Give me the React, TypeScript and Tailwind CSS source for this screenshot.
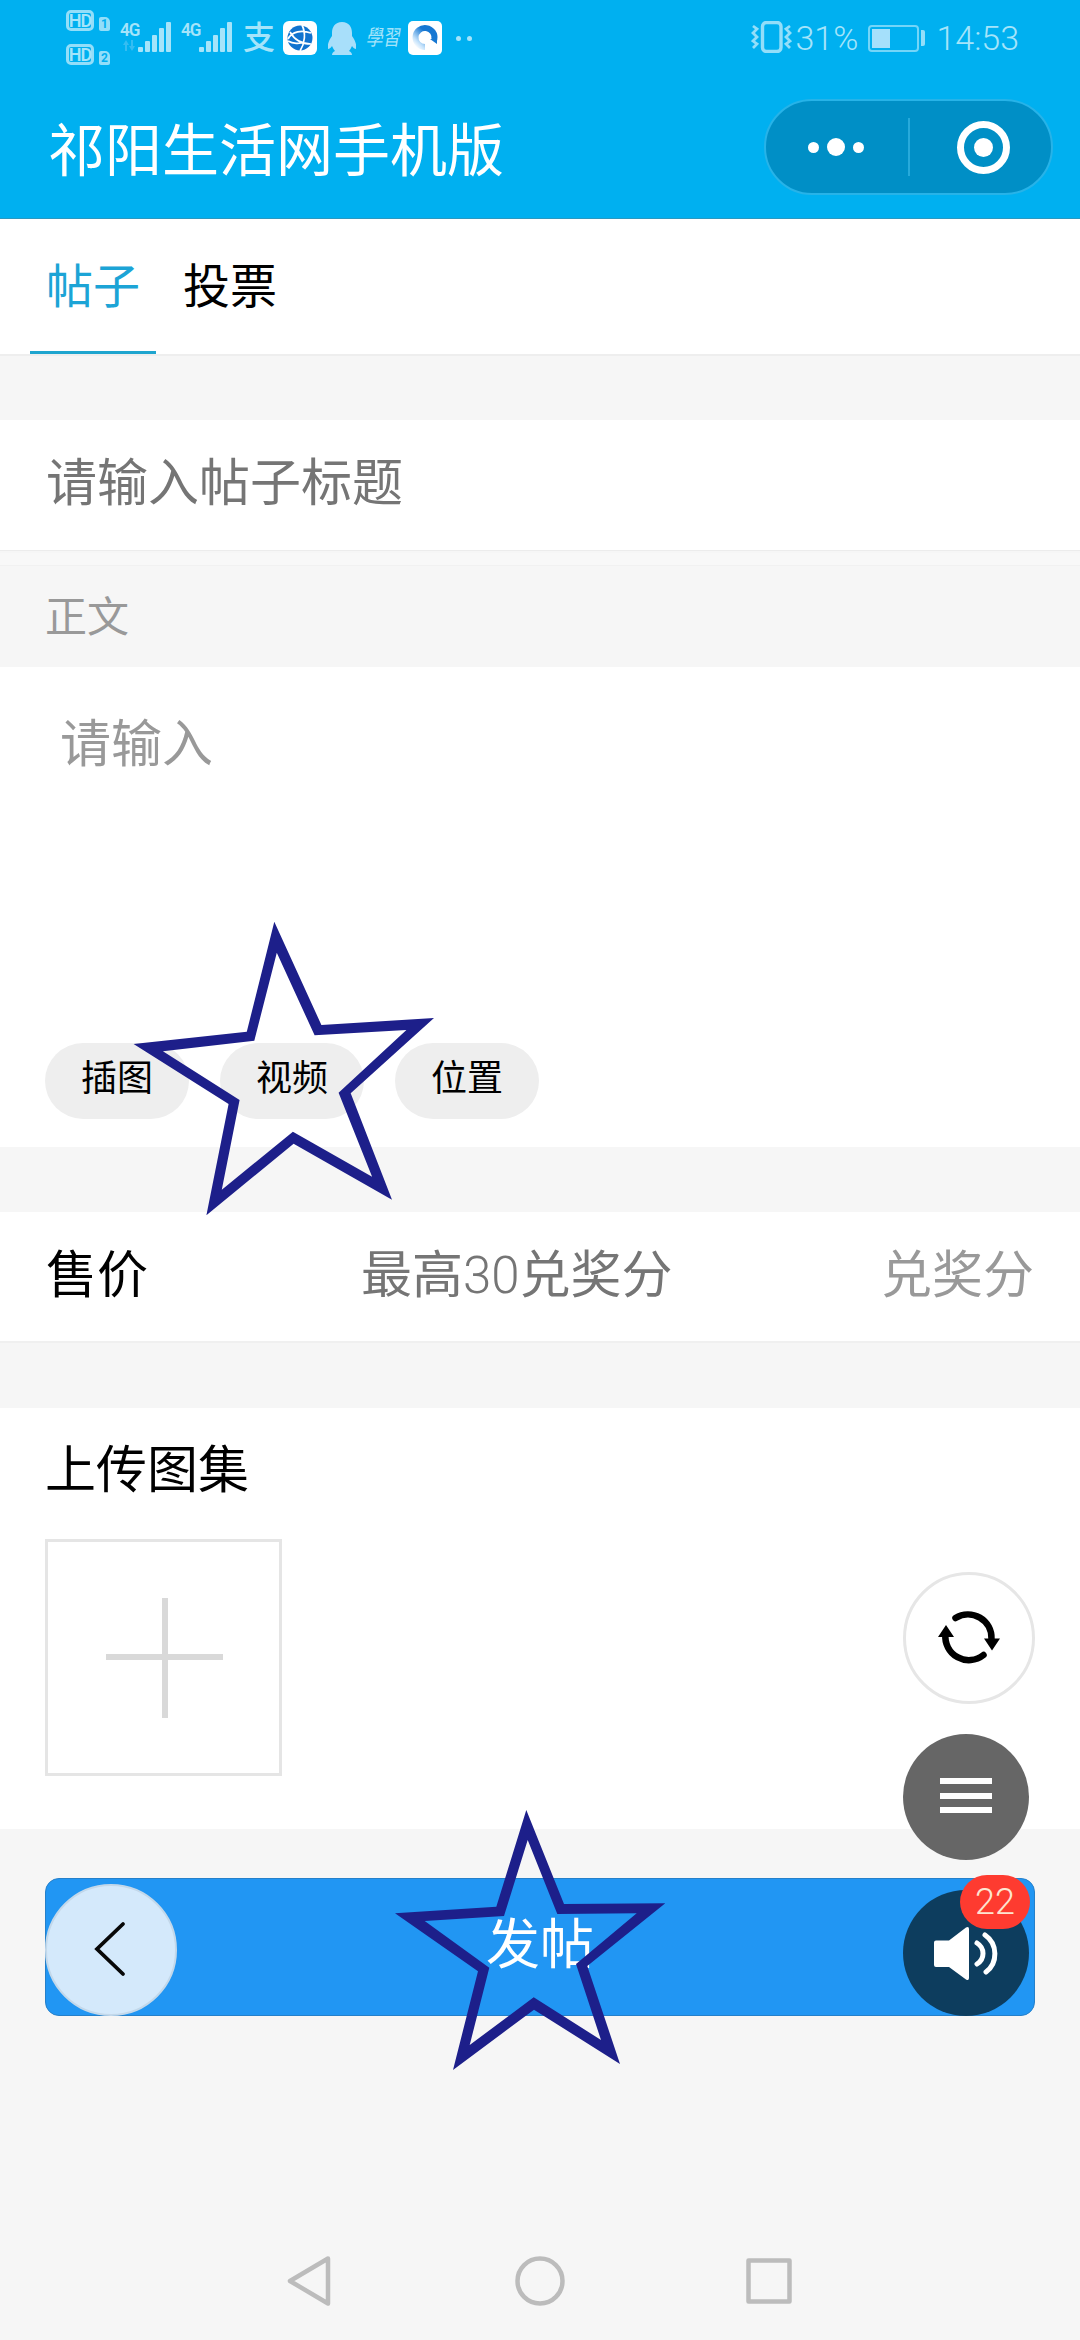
import { clsx } from "clsx";

const TABS = ["帖子", "投票"];
const TOOLS = ["插图", "视频", "位置"];

function HdBadge({ slot }: { slot: number }) {
  return (
    <div className="flex items-end gap-[5px]">
      <span className="flex h-[21px] w-[28px] items-center justify-center rounded-[5px] border-[3px] border-[#93def9] text-[18px] leading-none font-semibold tracking-[-1px]">
        HD
      </span>
      <span className="flex h-[14px] w-[11px] items-center justify-center rounded-[2px] rounded-tr-[5px] bg-[#93def9] text-[12px] leading-none font-bold text-[#00aeef]">
        {slot}
      </span>
    </div>
  );
}

function Signal({ arrows = false }: { arrows?: boolean }) {
  return (
    <div className="relative h-[34px] w-[51px]">
      <span className="absolute top-0 left-0 origin-top-left scale-x-90 text-[19px] leading-none font-semibold tracking-[-1px]">4G</span>
      {arrows && (
        <svg className="absolute top-[20px] left-[3px]" width="12" height="11" fill="#35bdf2">
          <path d="M0 5l3-5 3 5H4v6H2V5zM6 6l3 5 3-5h-2V0H8v6z" />
        </svg>
      )}
      <svg className="absolute top-[2px] left-[18px]" width="33" height="30" fill="#a5e4fa">
        <rect x="0" y="25" width="5" height="5" rx="1" />
        <rect x="7" y="19" width="5" height="11" rx="1" />
        <rect x="14" y="13" width="5" height="17" rx="1" />
        <rect x="21" y="6" width="5" height="24" rx="1" />
        <rect x="28" y="0" width="5" height="30" rx="1" />
      </svg>
    </div>
  );
}

function StatusBar() {
  return (
    <div className="flex h-[76px] pr-[61px] pl-[66px] text-[#a5e4fa]">
      <div className="flex w-[54px] flex-col gap-[13px] pt-[10px]">
        <HdBadge slot={1} />
        <HdBadge slot={2} />
      </div>
      <div className="flex gap-[10px] pt-[20px]">
        <Signal arrows />
        <Signal />
      </div>
      <div className="flex h-[76px] items-center">
        <span className="ml-[11px] w-[32px] text-[32px] leading-none font-medium">支</span>
        <svg className="ml-[8px]" width="34" height="34" viewBox="0 0 34 34" fill="none">
          <rect width="34" height="34" rx="6" fill="#fff" />
          <circle cx="17" cy="17" r="12.5" fill="#1173cf" />
          <path d="M19 4c4 8 3 18-2 26M5 18C9 10 19 9 28 12M7 11c4 7 11 12 21 12M5 20c5 3 12 3 16 1" stroke="#fff" strokeWidth="1.7" />
        </svg>
        <svg className="ml-[11px]" width="28" height="33" viewBox="0 0 28 33" fill="#a8dffa">
          <path d="M14 0C7 0 4 5 4 11v3C1 18-1 23 0 27c1 0 3-1 4-3 1 2 2 4 3 5-2 1-3 2-3 4h20c0-2-1-3-3-4 1-1 2-3 3-5 1 2 3 3 4 3 1-4-1-9-4-13v-3C24 5 21 0 14 0z" />
        </svg>
        <span className="ml-[11px] w-[34px] -skew-x-12 scale-y-125 text-[17px] leading-none">學習</span>
        <svg className="ml-[7px]" width="34" height="34" viewBox="0 0 34 34" fill="none">
          <defs>
            <linearGradient id="ring" x1="1" y1="0" x2="0" y2="1">
              <stop offset="0.35" stopColor="#1677d2" />
              <stop offset="0.8" stopColor="#c4e2fb" />
              <stop offset="1" stopColor="#fff" />
            </linearGradient>
          </defs>
          <rect width="34" height="34" rx="5" fill="#fff" />
          <path d="M17 26a9.5 9.5 0 1 1 9.3-7.5" stroke="url(#ring)" strokeWidth="6" />
          <path d="M22 18h7v5z" fill="#1677d2" />
        </svg>
        <span className="ml-[14px] size-[5px] rounded-full bg-[#a5e4fa]" />
        <span className="ml-[6px] size-[5px] rounded-full bg-[#a5e4fa]" />
      </div>
      <div className="ml-auto flex h-[76px] items-center text-[34px] leading-none">
        <svg className="-mt-[3px]" width="42" height="32" viewBox="0 0 42 32" fill="none" stroke="#93def9">
          <rect x="11.500" y="1.500" width="18.500" height="29" rx="4" strokeWidth="3.400" />
          <path d="M2 5l4 3-4 4 4 4-4 4 4 3-4 4M39 5l-4 3 4 4-4 4 4 4-4 3 4 4" strokeWidth="2.800" />
        </svg>
        <span className="ml-[2px] w-[73px] font-[350]">31%</span>
        <span className="flex h-[27px] w-[51px] rounded-[4px] border-2 border-[#74d5f8] p-[2px]">
          <span className="h-[19px] w-[18px] bg-[#a5e0fb]" />
        </span>
        <span className="ml-[2px] h-[16px] w-[4px] rounded-r-[2px] bg-[#93def9]" />
        <span className="ml-[11px] font-[350]">14:53</span>
      </div>
    </div>
  );
}

function Header() {
  return (
    <header className="h-[219px] border-b border-[#2b98c0] bg-[#00b0f0]">
      <StatusBar />
      <div className="flex h-[142px] items-start justify-between pr-[27px] pl-[48px]">
        <h1 className="mt-[47px] text-[57px] leading-none text-white">祁阳生活网手机版</h1>
        <div className="mt-[23px] flex h-[96px] w-[289px] items-center rounded-full border-2 border-[#27b3e8] bg-[#008fc6]">
          <div className="flex w-[139px] items-center justify-center gap-[8px]">
            <span className="size-[11px] rounded-full bg-white" />
            <span className="size-[18px] rounded-full bg-white" />
            <span className="size-[11px] rounded-full bg-white" />
          </div>
          <span className="ml-[3px] h-[58px] w-[2px] bg-[#27aadb]" />
          <div className="ml-[47px] flex size-[53px] items-center justify-center rounded-full border-[7px] border-white">
            <span className="size-[19px] rounded-full bg-white" />
          </div>
        </div>
      </div>
    </header>
  );
}

function FloatingButtons() {
  return (
    <>
      <div className="absolute top-[1884px] left-[45px] flex size-[132px] items-center justify-center rounded-full border-2 border-[#c3d8ea] bg-[#d4e9fb]">
        <svg className="mr-[2px] mb-[2px]" width="32" height="56" viewBox="0 0 32 56" fill="none" stroke="#080808" strokeWidth="3.800" strokeLinecap="round">
          <path d="M29 3L3 28l26 25" />
        </svg>
      </div>

      <div className="absolute top-[1572px] left-[903px] flex flex-col">
        <div className="flex size-[132px] items-center justify-center rounded-full border-[3px] border-[#e6e6e6] bg-white">
          <svg className="mb-[3px]" width="64" height="56" viewBox="0 0 64 56" fill="none" stroke="#000" strokeWidth="6.500" strokeLinecap="round">
            <path d="M18.500 9A23.500 23.500 0 0 1 54.500 30" />
            <path d="M46.500 46A23.500 23.500 0 0 1 8.500 25" />
            <path d="M47 29.500h16l-8 12zM1 28l8-12 8 12z" fill="#000" stroke="none" />
          </svg>
        </div>
        <div className="mt-[30px] flex size-[126px] flex-col items-center justify-center gap-[8.500px] rounded-full bg-[#666] pb-[3px]">
          <span className="h-[6px] w-[52px] bg-white" />
          <span className="h-[6px] w-[52px] bg-white" />
          <span className="h-[6px] w-[52px] bg-white" />
        </div>
        <div className="relative mt-[30px] size-[126px] rounded-full bg-[#0d3d5e] pt-[36px] pl-[30px]">
          <svg width="66" height="56" viewBox="0 0 66 56" fill="none">
            <path d="M3 14.500h13L33 1.500q3-1.500 3 1.500v49q0 3-3 1.500L16 41H3q-2 0-2-2V16.500q0-2 2-2z" fill="#fff" />
            <path d="M44 17c8 5 8 16 0 21" stroke="#fff" strokeWidth="5" strokeLinecap="round" />
            <path d="M52 9c13 9 13 28 1 37" stroke="#fff" strokeWidth="5" strokeLinecap="round" />
          </svg>
          <span className="absolute top-[-15px] left-[57px] flex h-[54px] w-[70px] items-center justify-center rounded-full bg-[#fe3b30] text-[36px] leading-none font-light text-[#fde4d0]">
            22
          </span>
        </div>
      </div>
    </>
  );
}

// hand-drawn style marks over the video chip and the submit button
function Stars() {
  return (
    <svg className="pointer-events-none absolute top-0 left-0" width="1080" height="2340" fill="#1d1f8a" fillRule="evenodd">
      <path d="M274.300 921.700L321.400 1025L434 1018L350.700 1093.300L392 1199.700L293.600 1143.700L206.400 1215.300L228.600 1104L133.600 1044L246.800 1031.700ZM276.800 952.700L314.600 1035.300L406.400 1030L338.600 1092.700L372.100 1176.700L292.900 1131.700L221.800 1189.700L239.600 1100L162.900 1051.300L254.300 1040.700Z" />
      <path d="M526.300 1810L564 1904L665.300 1903.300L587.300 1966L620 2064L534 2009.700L453 2070L478 1971.300L395 1913.300L496.300 1906.700ZM527.700 1840L557.300 1914L636.700 1913.300L576 1964L601 2040L533.700 1997.300L469.700 2045L489.300 1967.700L424.700 1921L504 1916Z" />
    </svg>
  );
}

export default function App() {
  return (
    <div className="relative flex h-[2340px] w-[1080px] flex-col overflow-hidden bg-[#f6f6f6] font-['Roboto','Noto_Sans_CJK_SC',sans-serif] text-black">
      <Header />

      <nav className="flex h-[137px] border-b-2 border-[#eeeeee] bg-white pl-[30px]">
        {TABS.map((tab, i) => (
          <div
            key={tab}
            className={clsx(
              "flex h-[135px] items-start border-b-[3px] px-[16px] pt-[44px] text-[47px] leading-none",
              i === 0 ? "w-[126px] border-[#1fa5cf] text-[#1ca4d6]" : "ml-[11px] border-transparent"
            )}
          >
            <span className="whitespace-nowrap">{tab}</span>
          </div>
        ))}
      </nav>

      <div className="mt-[64px] flex h-[131px] items-center border-b border-[#ececec] bg-white pb-[4px] pl-[46px] text-[51px] leading-none text-[#757575]">
        请输入帖子标题
      </div>

      <div className="mt-[2px] h-[13px] border-b border-[#f1f1f1] bg-[#f8f8f8]" />
      <div className="flex h-[101px] items-center pt-[3px] pl-[45px] text-[42px] leading-none text-[#999]">正文</div>

      <div className="flex h-[480px] flex-col justify-between bg-white pb-[28px] pl-[45px]">
        <div className="mt-[52px] pl-[15px] text-[51px] leading-none text-[#999]">请输入</div>
        <div className="flex gap-[31px]">
          {TOOLS.map((tool) => (
            <button key={tool} className="h-[76px] w-[144px] rounded-full bg-[#eeeeee] pb-[4px] text-[36px] leading-none">
              {tool}
            </button>
          ))}
        </div>
      </div>

      <div className="mt-[65px] flex h-[131px] items-center border-b-2 border-[#f0f0f0] bg-white pr-[46px] pb-[3px] pl-[46px] text-[51px] leading-none">
        <span>售价</span>
        <span className="ml-[213px] text-[#757575]">
          最高<span className="font-light">30</span>兑奖分
        </span>
        <span className="ml-auto text-[#999]">兑奖分</span>
      </div>

      <div className="mt-[65px] h-[421px] bg-white pt-[37px] pl-[45px]">
        <h2 className="text-[51px] leading-none">上传图集</h2>
        <div className="mt-[43px] flex size-[237px] items-center justify-center border-[3px] border-[#e5e5e5]">
          <svg width="120" height="120" viewBox="0 0 120 120" stroke="#d9d9d9" strokeWidth="6">
            <path d="M2 59h117M61 0v120" />
          </svg>
        </div>
      </div>

      <button className="mt-[49px] ml-[45px] flex h-[138px] w-[990px] justify-center rounded-[14px] border border-[#2580ca] bg-[#2196f3] pt-[40px] text-[54px] leading-none text-white">
        发帖
      </button>

      <div className="mt-auto mb-[34px] flex h-[50px] items-center pl-[287px]">
        <svg width="506" height="50" viewBox="0 0 506 50" fill="none" stroke="#bcbcbc" strokeWidth="4.500" strokeLinejoin="round">
          <path d="M41 2.500L3 25l38 22.500z" />
          <circle cx="253" cy="25" r="22.500" />
          <rect x="461.500" y="4.500" width="41" height="41" />
        </svg>
      </div>

      <FloatingButtons />
      <Stars />
    </div>
  );
}
